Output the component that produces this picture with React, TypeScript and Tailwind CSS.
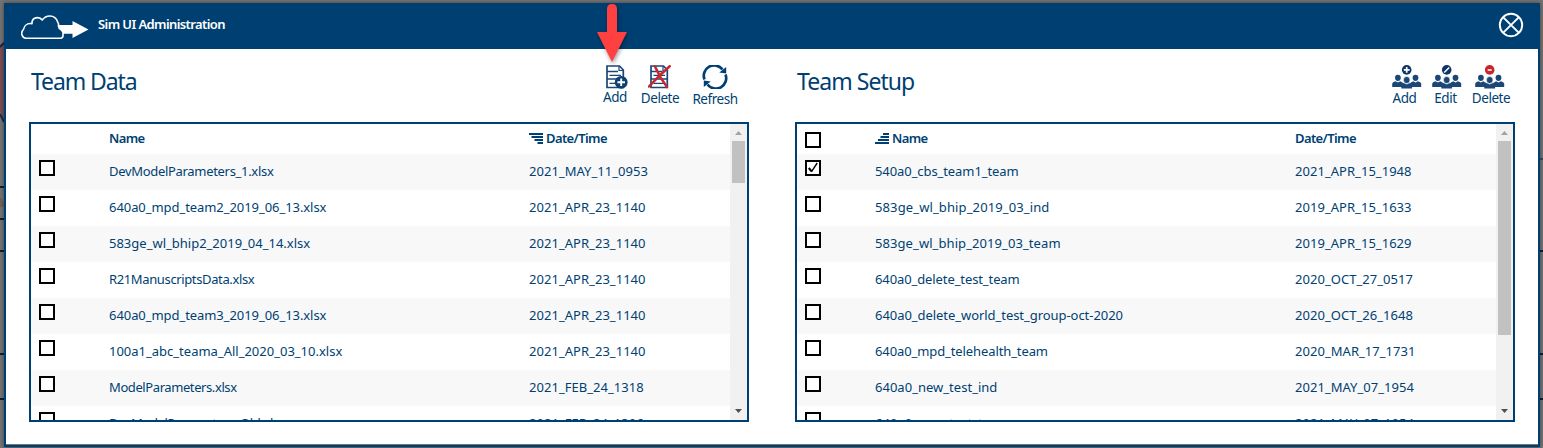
import type { ReactNode } from "react";

type Row = { name: string; date: string; fit: string; checked?: boolean };

const dataRows: Row[] = [
  { name: "DevModelParameters_1.xlsx", date: "2021_MAY_11_0953", fit: "tracking-[-0.31px]" },
  { name: "640a0_mpd_team2_2019_06_13.xlsx", date: "2021_APR_23_1140", fit: "tracking-[-0.06px]" },
  { name: "583ge_wl_bhip2_2019_04_14.xlsx", date: "2021_APR_23_1140", fit: "tracking-[0px]" },
  { name: "R21ManuscriptsData.xlsx", date: "2021_APR_23_1140", fit: "tracking-[-0.37px]" },
  { name: "640a0_mpd_team3_2019_06_13.xlsx", date: "2021_APR_23_1140", fit: "tracking-[-0.06px]" },
  { name: "100a1_abc_teama_All_2020_03_10.xlsx", date: "2021_APR_23_1140", fit: "tracking-[0px]" },
  { name: "ModelParameters.xlsx", date: "2021_FEB_24_1318", fit: "tracking-[-0.41px]" },
  { name: "DevModelParameters_Old.xlsx", date: "2021_FEB_24_1306", fit: "tracking-[-0.37px]" },
];

const setupRows: Row[] = [
  { name: "540a0_cbs_team1_team", date: "2021_APR_15_1948", fit: "tracking-[-0.08px]", checked: true },
  { name: "583ge_wl_bhip_2019_03_ind", date: "2019_APR_15_1633", fit: "tracking-[0.12px]" },
  { name: "583ge_wl_bhip_2019_03_team", date: "2019_APR_15_1629", fit: "tracking-[0.08px]" },
  { name: "640a0_delete_test_team", date: "2020_OCT_27_0517", fit: "tracking-[-0.1px]" },
  { name: "640a0_delete_world_test_group-oct-2020", date: "2020_OCT_26_1648", fit: "tracking-[-0.05px]" },
  { name: "640a0_mpd_telehealth_team", date: "2020_MAR_17_1731", fit: "tracking-[-0.1px]" },
  { name: "640a0_new_test_ind", date: "2021_MAY_07_1954", fit: "tracking-[0.02px]" },
  { name: "640a0_new_test_team", date: "2021_MAY_07_1954", fit: "tracking-[0.02px]" },
];

function CloudLogo() {
  return (
    <svg width="68" height="26" viewBox="0 0 68 26" fill="none">
      <path
        d="M5 23.3H39.500Q42 23 42 20.500V17L37.500 11.500Q37.800 8.500 36.800 7.200C35.500 3 32.500 1 28.800 1C25.500 1 23 2.600 21.200 5C18.500 1.200 10.500 2 11 8.600C6.500 8 3.200 10.500 2.600 14.200C.8 16 .3 18 1 20Q2 23 5 23.300Z"
        stroke="#fff"
        strokeWidth="1.6"
        strokeLinejoin="round"
      />
      <path d="M37.500 10H51.500V6L67.500 14.500L51.500 23V18.800H42Q42 16 37.500 14Z" fill="#fff" />
    </svg>
  );
}

function Doc() {
  return (
    <>
      <path d="M1 1H13.5L17.3 5V22.500H1Z" fill="#fff" stroke="#1b4777" strokeWidth="1.7" />
      <path d="M13 1V5.500H17.300" stroke="#1b4777" strokeWidth="1.2" />
      <path d="M1 6.500H12M3.500 10.300H15M1 14H17M3.500 18.300H15" stroke="#1b4777" strokeWidth="1.3" />
    </>
  );
}

function DocAddIcon() {
  return (
    <svg width="22" height="24" viewBox="0 0 22 24" fill="none">
      <Doc />
      <circle cx="15.2" cy="17.3" r="6.4" fill="#0a4074" />
      <path d="M15.200 13.500V21.100M11.400 17.300H19" stroke="#fff" strokeWidth="1.9" />
    </svg>
  );
}

function DocDeleteIcon() {
  return (
    <svg width="23" height="24" viewBox="0 0 23 24" fill="none">
      <g transform="translate(2 0)">
        <Doc />
      </g>
      <path d="M21.700 1.200Q11 10.500 1 21.500M7 1.500Q12 13 19 22" stroke="#c9252c" strokeWidth="2.500" strokeLinecap="round" />
    </svg>
  );
}

function RefreshIcon() {
  return (
    <svg width="26" height="24" viewBox="0 0 26 24" fill="none">
      <path d="M2.500 14.500A10.400 10.400 0 0 1 20.500 4.500M23.500 9.500A10.400 10.400 0 0 1 5.500 19.500" stroke="#003f72" strokeWidth="2.700" />
      <path d="M24.200 2V8.600L17.300 7.500ZM1.800 22V15.400L8.700 16.500Z" fill="#003f72" />
    </svg>
  );
}

function TeamIcon({ kind }: { kind: "add" | "edit" | "delete" }) {
  return (
    <svg width="30" height="24" viewBox="0 0 30 24" fill="none">
      <g fill="#1b4777">
        <ellipse cx="5.9" cy="12.800" rx="2.900" ry="3.100" />
        <ellipse cx="23.500" cy="12.800" rx="2.900" ry="3.100" />
        <path d="M.2 22V18.500Q.5 17 3.500 16.300L5.900 17.500L8.300 16.300L12 18.500V22ZM29.200 22V18.500Q28.900 17 25.900 16.300L23.500 17.500L21.100 16.300L17.400 18.500V22Z" />
        <path d="M9.300 23.500V20.500Q9.500 19 12.500 18.300L14.700 19.500L16.900 18.300Q19.900 19 20.100 20.500V23.500Z" />
        <ellipse cx="14.700" cy="15" rx="3.300" ry="3.500" stroke="#fff" strokeWidth=".6" />
      </g>
      <circle cx="14.700" cy="4.900" r="4.800" fill={kind === "delete" ? "#c9252c" : "#0f3565"} />
      {kind === "add" && <path d="M14.700 2V7.800M11.800 4.900H17.600" stroke="#fff" strokeWidth="1.700" />}
      {kind === "edit" && <path d="M12.200 7.600L17.200 2.400" stroke="#fff" strokeWidth="1.500" />}
      {kind === "delete" && <path d="M12.700 5H16.700" stroke="#fff" strokeWidth="1.600" />}
    </svg>
  );
}

function CloseIcon() {
  return (
    <svg width="26" height="26" viewBox="0 0 26 26" fill="none" stroke="#fff" strokeWidth="1.900">
      <circle cx="13" cy="13" r="11.200" />
      <path d="M5.300 5.300L20.700 20.700M20.700 5.300L5.300 20.700" />
    </svg>
  );
}

function SortDesc() {
  return (
    <svg width="15" height="11" viewBox="0 0 15 11" className="mr-0.5 shrink-0" stroke="#003f72" strokeWidth="1.800">
      <path d="M0 1H14M2.500 4H14M5.500 7H14M8.500 10H14" />
    </svg>
  );
}

function SortAsc() {
  return (
    <svg width="15" height="11" viewBox="0 0 15 11" className="mr-0.5 shrink-0" stroke="#003f72" strokeWidth="1.800">
      <path d="M8 1H14M5.500 4H14M3 7H14M0 10H14" />
    </svg>
  );
}

function Checkbox({ checked }: { checked?: boolean }) {
  return (
    <span className="flex size-4 items-center justify-center border-2 border-black bg-white">
      {checked && (
        <svg width="12" height="12" viewBox="0 0 12 12" fill="none" stroke="#000">
          <path d="M1.800 6L4.600 9.400" strokeWidth="2.100" />
          <path d="M4.400 9.900L10.200 1" strokeWidth="1.400" />
        </svg>
      )}
    </span>
  );
}

function Tool({ icon, label, className }: { icon: ReactNode; label: string; className: string }) {
  return (
    <button className={`flex flex-col items-center text-[13.5px] leading-4 tracking-[-0.45px] whitespace-nowrap ${className}`}>
      {icon}
      <span>{label}</span>
    </button>
  );
}

function ScrollBar({ thumb }: { thumb: string }) {
  return (
    <div className="flex w-[17px] shrink-0 flex-col items-center bg-[#f1f1f1]">
      <svg width="17" height="17" viewBox="0 0 17 17" className="shrink-0">
        <path d="M5 11H12L8.500 7Z" fill="#a3a3a3" />
      </svg>
      <div className={`w-[13px] bg-[#c1c1c1] ${thumb}`} />
      <svg width="17" height="17" viewBox="0 0 17 17" className="mt-auto shrink-0">
        <path d="M5 6H12L8.500 10Z" fill="#505050" />
      </svg>
    </div>
  );
}

function Grid({ rows, head, thumb }: { rows: Row[]; head: ReactNode; thumb: string }) {
  return (
    <div className="flex h-[300px] w-[720px] overflow-hidden border-2 border-[#003f72]">
      <div className="flex min-w-0 flex-1 flex-col text-[13px]">
        <div className="flex h-[30px] shrink-0 pl-2 font-semibold tracking-[-0.6px]">{head}</div>
        {rows.map((row, i) => (
          <div key={i} className="flex h-9 shrink-0 pl-2 leading-[34px] odd:bg-white even:bg-[#f8f8f8]">
            <div className="w-[70px] pt-1.5">
              <Checkbox checked={row.checked} />
            </div>
            <div className={`w-[420px] ${row.fit}`}>{row.name}</div>
            <div className="tracking-[0.04px]">{row.date}</div>
          </div>
        ))}
      </div>
      <ScrollBar thumb={thumb} />
    </div>
  );
}

export default function App() {
  return (
    <div className="relative h-[448px] w-[1543px] overflow-hidden bg-[#737373] font-['Noto_Sans',sans-serif] text-[#003f72]">
      <svg className="absolute inset-0" width="1543" height="448">
        <path d="M0 45L4 41V120L0 112Z" fill="#764f54" />
        <path d="M0 47L4 43M0 114L4 122" stroke="#142c4b" strokeWidth="2" />
        <path d="M0 187H4M0 219H4M0 251H4M0 354H4M0 399H4M1540 251H1543M1540 354H1543M1540 399H1543" stroke="#0a2038" strokeWidth="2" />
        <path d="M1540 159H1543" stroke="#0a2038" />
        <path d="M1 198V207M3 201V207" stroke="#685139" />
      </svg>
      <div className="relative mt-[3px] ml-1 flex h-[444px] w-[1536px] flex-col border-2 border-t-0 border-[#003f72] bg-white shadow-[0_0_4px_rgba(0,0,0,0.45)]">
        <header className="flex h-[46px] shrink-0 items-start bg-[#003f72] pl-[15px] text-white">
          <div className="pt-3">
            <CloudLogo />
          </div>
          <h1 className="ml-[9px] pt-[11px] text-[13px] leading-5 font-semibold tracking-[-0.6px]">Sim UI Administration</h1>
          <div className="mr-[14px] ml-auto pt-[9px]">
            <CloseIcon />
          </div>
        </header>
        <main className="flex flex-1 border-b border-[#737373] pl-[23px]">
          <section className="w-[720px]">
            <div className="flex h-[73px] items-start justify-between pl-0.5">
              <h2 className="pt-4 text-[23px] leading-[33px] tracking-[-1.1px]">Team Data</h2>
              <div className="flex pt-4 pr-[10px]">
                <Tool icon={<DocAddIcon />} label="Add" className="w-8 [&>svg]:ml-[3px]" />
                <Tool icon={<DocDeleteIcon />} label="Delete" className="ml-[9px] w-10 [&>span]:mt-px [&>svg]:-ml-0.5" />
                <Tool icon={<RefreshIcon />} label="Refresh" className="ml-[11px] w-12 [&>span]:mt-0.5" />
              </div>
            </div>
            <Grid
              rows={dataRows}
              thumb="h-[42px]"
              head={
                <>
                  <div className="w-[70px]" />
                  <div className="w-[420px] leading-[29px]">Name</div>
                  <div className="flex h-[29px] items-center">
                    <SortDesc />
                    Date/Time
                  </div>
                </>
              }
            />
          </section>
          <section className="ml-[46px] w-[720px]">
            <div className="flex h-[73px] items-start justify-between pl-0.5">
              <h2 className="pt-4 text-[23px] leading-[33px] tracking-[-0.95px]">Team Setup</h2>
              <div className="flex pt-4 pr-[4px]">
                <Tool icon={<TeamIcon kind="add" />} label="Add" className="w-[30px] [&>span]:mt-px [&>span]:-ml-[3px] [&>svg]:ml-0.5" />
                <Tool icon={<TeamIcon kind="edit" />} label="Edit" className="ml-[10px] w-[30px] [&>span]:mt-px [&>span]:-ml-px [&>svg]:ml-0.5" />
                <Tool icon={<TeamIcon kind="delete" />} label="Delete" className="ml-[10px] w-10 [&>span]:mt-px [&>svg]:-ml-[3px]" />
              </div>
            </div>
            <Grid
              rows={setupRows}
              thumb="h-[194px]"
              head={
                <>
                  <div className="w-[70px] pt-2">
                    <Checkbox />
                  </div>
                  <div className="flex h-[29px] w-[420px] items-center">
                    <SortAsc />
                    Name
                  </div>
                  <div className="leading-[29px]">Date/Time</div>
                </>
              }
            />
          </section>
        </main>
      </div>
      <svg className="absolute top-0 left-[590px] drop-shadow-[1px_2px_2px_rgba(0,0,0,0.4)]" width="44" height="68" viewBox="0 0 44 68">
        <path d="M17 32V9Q17 4 22 4Q27 4 27 9V32H37L22 62L7 32Z" fill="#ff4040" />
      </svg>
    </div>
  );
}
